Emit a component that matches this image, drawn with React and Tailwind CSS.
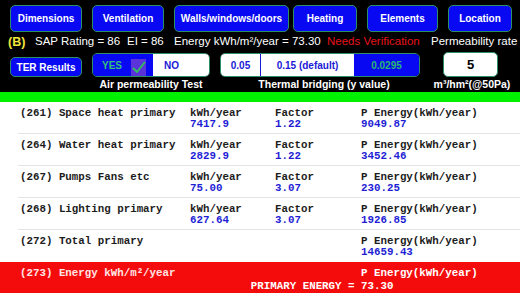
import React from 'react'

const sans = "font-['Liberation_Sans',Arial,sans-serif]"
const mono = "font-['Liberation_Mono','Courier_New',monospace]"

function NavButton({ label, className = '' }) {
  return (
    <div
      className={`h-[27px] rounded-[5px] bg-[#0808f2] border border-[#2a8f66] flex items-center
                  justify-center text-white font-bold text-[10px] ${className}`}
    >
      {label}
    </div>
  )
}

const rows = [
  { id: '(261) Space heat primary', kwh: '7417.9', factor: '1.22', p: '9049.87' },
  { id: '(264) Water heat primary', kwh: '2829.9', factor: '1.22', p: '3452.46' },
  { id: '(267) Pumps Fans etc', kwh: '75.00', factor: '3.07', p: '230.25' },
  { id: '(268) Lighting primary', kwh: '627.64', factor: '3.07', p: '1926.85' },
]

export default function App() {
  return (
    <div className={`w-[520px] h-[293px] overflow-hidden bg-white ${sans}`}>
      {/* Top: black control panel */}
      <div className="h-[92px] bg-black flex flex-col">
        <div className="flex pt-[5px]">
          <NavButton label="Dimensions" className="ml-[10px] w-[72px]" />
          <NavButton label="Ventilation" className="ml-[10px] w-[72px]" />
          <NavButton label="Walls/windows/doors" className="ml-[10px] w-[115px]" />
          <NavButton label="Heating" className="ml-[4px] w-[64px]" />
          <NavButton label="Elements" className="ml-[10px] w-[71px]" />
          <NavButton label="Location" className="ml-[10px] w-[64px]" />
        </div>

        {/* Ratings line */}
        <div className="h-[20px] flex items-center text-[11.5px] text-white whitespace-nowrap overflow-hidden">
          <span className="shrink-0 ml-[8px] w-[27px] text-[#f2e63a] font-bold text-[12.5px]">(B)</span>
          <span className="shrink-0 w-[92px]">SAP Rating = 86</span>
          <span className="shrink-0 w-[47px]">EI = 86</span>
          <span className="shrink-0 w-[153px]">Energy kWh/m²/year = 73.30</span>
          <span className="shrink-0 w-[104px] text-[#e8141a]">Needs Verification</span>
          <span className="shrink-0">Permeability rate</span>
        </div>

        {/* Controls */}
        <div className="h-[25px] flex items-end">
          <div className="ml-[10px] w-[72px] h-[20px] rounded-[5px] bg-[#0808f2] border border-[#2a8f66]
                          flex items-center justify-center text-white font-bold text-[10px]">
            TER Results
          </div>

          <div className="ml-[10px] w-[118px] h-[24px] rounded-[5px] border border-[#2a8f66] overflow-hidden flex">
            <div className="w-[60px] bg-[#0808f2] flex">
              <span className="ml-[9px] self-center text-[#34c07a] font-bold text-[10px]">YES</span>
              <div className="ml-[9px] self-end w-[15px] h-[17px] bg-[#5a34d8] flex items-center justify-center">
                <svg width="15" height="15" viewBox="0 0 15 15">
                  <path d="M2 8 L6 12 L14 2" fill="none" stroke="#2fc35e" strokeWidth="1.8" />
                </svg>
              </div>
            </div>
            <div className="flex-1 bg-white flex items-center pl-[11px] text-[#1a1ad6] font-bold text-[10px]">
              NO
            </div>
          </div>

          <div className="ml-[10px] w-[200px] h-[24px] rounded-[5px] border border-[#2a8f66] overflow-hidden flex
                          text-[10px] font-bold">
            <div className="w-[40px] bg-white border-r border-[#1a1ad6] flex items-center justify-center text-[#1a1ad6]">
              0.05
            </div>
            <div className="w-[93px] bg-white flex items-center justify-center text-[#1a1ad6]">
              0.15 (default)
            </div>
            <div className="flex-1 bg-[#0808f2] flex items-center justify-center text-[#2bb673]">
              0.0295
            </div>
          </div>

          <div className="ml-[23px] w-[55px] h-[25px] rounded-[5px] bg-white border border-[#2a8f66]
                          flex items-center justify-center text-black font-bold text-[13px]">
            5
          </div>
        </div>

        {/* Control labels */}
        <div className="h-[15px] flex items-center text-white font-bold text-[10.5px] whitespace-nowrap">
          <div className="ml-[92px] w-[118px] text-center">Air permeability Test</div>
          <div className="ml-[10px] w-[208px] text-center">Thermal bridging (y value)</div>
          <div className="ml-[4px] w-[80px] text-center">m³/hm²(@50Pa)</div>
        </div>
      </div>

      <div className="h-[10px] bg-[#00f000]" />

      {/* Primary energy table */}
      <div className={`${mono} font-bold text-[10.8px] leading-[11px] whitespace-pre`}>
        {rows.map(r => (
          <div
            key={r.id}
            className="ml-[18px] h-[32px] border-b border-[#e4e4e4] pl-[2px] pt-[6px]
                       grid grid-cols-[170px_85px_86px_1fr]"
          >
            <div className="text-[#1c1c1c]">{r.id}</div>
            <div>
              <div className="text-[#1c1c1c]">kWh/year</div>
              <div className="text-[#1e1ed6]">{r.kwh}</div>
            </div>
            <div>
              <div className="text-[#1c1c1c]">Factor</div>
              <div className="text-[#1e1ed6]">{r.factor}</div>
            </div>
            <div>
              <div className="text-[#1c1c1c]">P Energy(kWh/year)</div>
              <div className="text-[#1e1ed6]">{r.p}</div>
            </div>
          </div>
        ))}

        <div className="ml-[18px] h-[32px] pl-[2px] pt-[6px] grid grid-cols-[170px_85px_86px_1fr]">
          <div className="text-[#1c1c1c]">(272) Total primary</div>
          <div />
          <div />
          <div>
            <div className="text-[#1c1c1c]">P Energy(kWh/year)</div>
            <div className="text-[#1e1ed6]">14659.43</div>
          </div>
        </div>

        <div className="h-[31px] bg-[#f40c0c] pl-[20px] pt-[6px] grid grid-cols-[170px_85px_86px_1fr] text-white">
          <div className="col-span-3 text-[#ffe4e4]">(273) Energy kWh/m²/year</div>
          <div>P Energy(kWh/year)</div>
          <div className="col-span-3 text-right">PRIMARY ENERGY = </div>
          <div>73.30</div>
        </div>
      </div>
    </div>
  )
}
